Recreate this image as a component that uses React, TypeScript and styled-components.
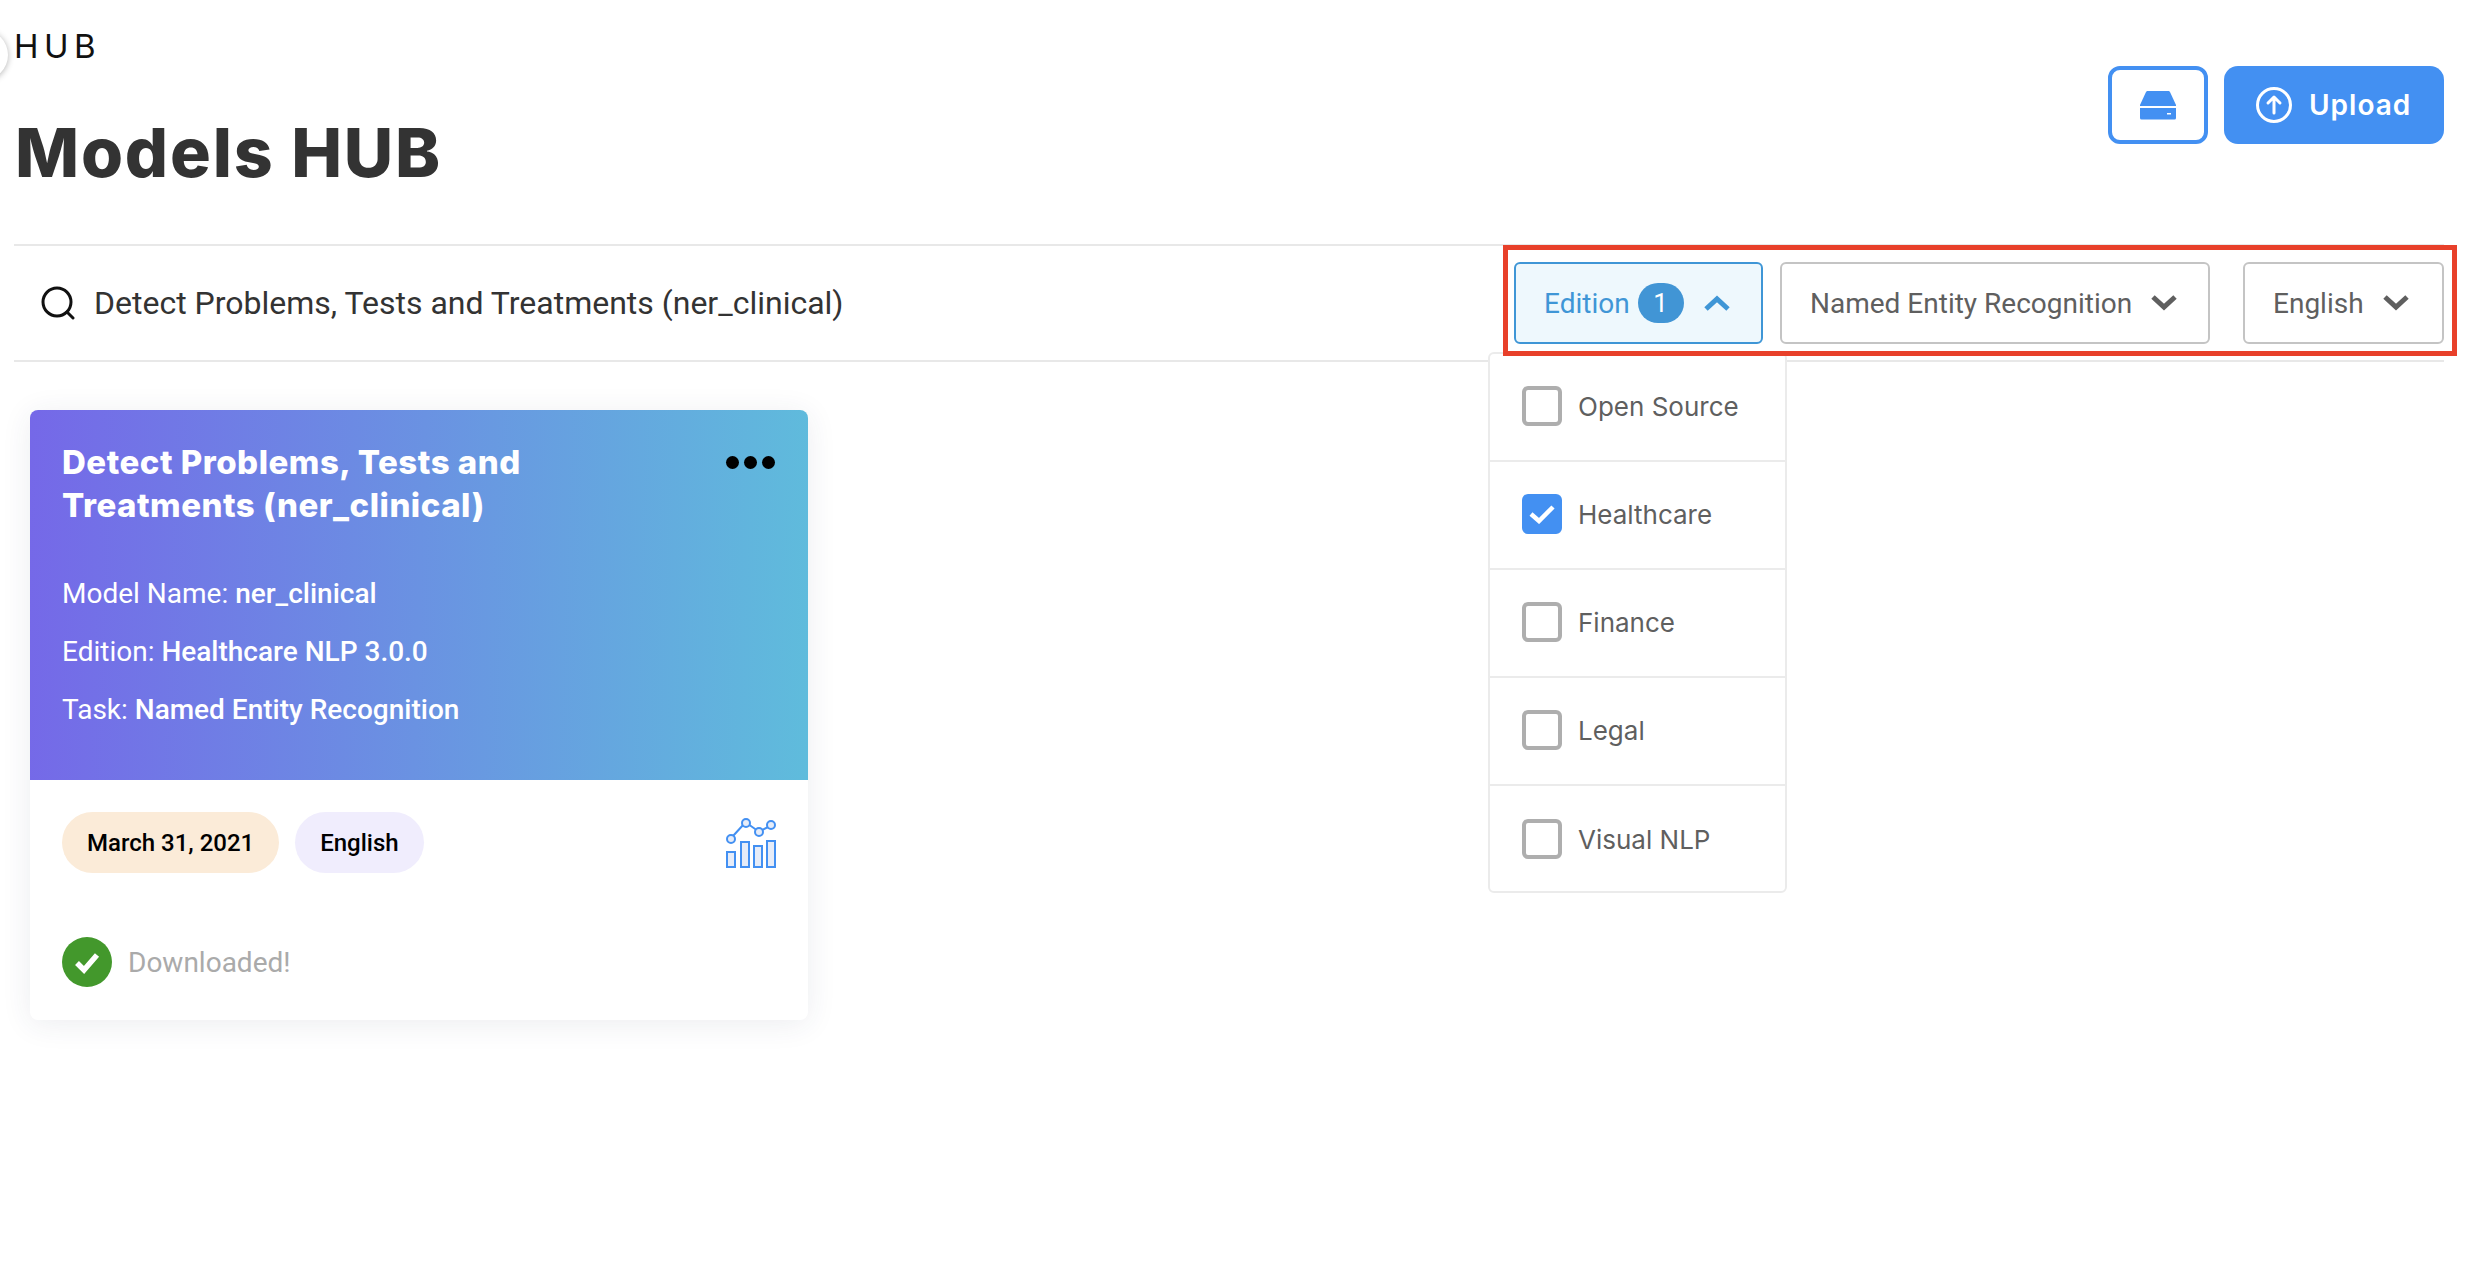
import React from 'react'
import styled, { createGlobalStyle } from 'styled-components'

const GlobalStyle = createGlobalStyle`
  html, body {
    margin: 0;
    padding: 0;
    background: #fff;
    font-family: Roboto, "Liberation Sans", sans-serif;
  }
  * {
    box-sizing: border-box;
  }
`

const Page = styled.div`
  position: relative;
  width: 2476px;
  height: 1272px;
  padding: 0 32px 0 14px;
  overflow: hidden;
`

const SideToggle = styled.div`
  position: absolute;
  left: -42px;
  top: 30px;
  width: 50px;
  height: 50px;
  border-radius: 50%;
  background: #fff;
  box-shadow: 0 1px 6px rgba(0, 0, 0, 0.3);
`

const Header = styled.header`
  display: flex;
  justify-content: space-between;
  align-items: flex-start;
  height: 244px;
`

const Breadcrumb = styled.div`
  margin-top: 30px;
  font-family: Inter, sans-serif;
  font-size: 33px;
  line-height: 32px;
  letter-spacing: 5.5px;
  color: #111;
`

const Title = styled.h1`
  margin: 54px 0 0 1px;
  font-family: Inter, sans-serif;
  font-size: 68px;
  line-height: 72px;
  font-weight: 800;
  letter-spacing: 1.8px;
  color: #333;
`

const Actions = styled.div`
  display: flex;
  gap: 16px;
  margin-top: 66px;
`

const StorageButton = styled.button`
  display: flex;
  align-items: center;
  justify-content: center;
  width: 100px;
  height: 78px;
  padding: 0;
  background: #fff;
  border: 4px solid #4390f2;
  border-radius: 12px;
`

const UploadButton = styled.button`
  display: flex;
  align-items: center;
  gap: 17px;
  width: 220px;
  height: 78px;
  padding: 0 0 0 32px;
  background: #4390f2;
  border: 0;
  border-radius: 14px;
  color: #fff;
  font-family: Inter, sans-serif;
  font-size: 28px;
  font-weight: 600;
  letter-spacing: 1px;
`

const FilterBar = styled.div`
  display: flex;
  justify-content: space-between;
  align-items: center;
  height: 118px;
  padding-left: 27px;
  border-top: 2px solid #e8e8e8;
  border-bottom: 2px solid #e8e8e8;
`

const Search = styled.div`
  display: flex;
  align-items: center;
  gap: 19px;
  font-size: 32px;
  color: #333;
`

const Filters = styled.div`
  display: flex;
  align-items: center;
`

const FilterWrap = styled.div<{ $gap: number }>`
  position: relative;
  margin-right: ${p => p.$gap}px;
`

const FilterButton = styled.div<{ $active?: boolean; $width: number }>`
  display: flex;
  align-items: center;
  width: ${p => p.$width}px;
  height: 82px;
  padding-left: 28px;
  border: 2px solid ${p => (p.$active ? '#3f96d6' : '#c4c4c4')};
  border-radius: 6px;
  background: ${p => (p.$active ? '#eef8fd' : '#fff')};
  color: ${p => (p.$active ? '#3f96d6' : '#5f5f5f')};
  font-size: 28px;
`

const Count = styled.span`
  display: flex;
  align-items: center;
  justify-content: center;
  width: 46px;
  height: 40px;
  margin-left: 8px;
  border-radius: 20px;
  background: #4195d5;
  color: #fff;
  font-size: 26px;
`

const Chevron = styled.svg<{ $left: number }>`
  width: 26px;
  height: 16px;
  margin-left: ${p => p.$left}px;
`

const Menu = styled.div`
  position: absolute;
  left: -26px;
  top: 90px;
  width: 299px;
  height: 541px;
  background: #fff;
  border: 2px solid #ebebeb;
  border-radius: 6px;
  z-index: 1;
`

const MenuItem = styled.div`
  display: flex;
  align-items: center;
  gap: 16px;
  height: 108px;
  padding: 0 0 2px 32px;
  border-bottom: 2px solid #ebebeb;
  color: #5f5f5f;
  font-family: Inter, sans-serif;
  font-size: 26px;

  &:last-child {
    border-bottom: 0;
  }
`

const Checkbox = styled.span<{ $checked?: boolean }>`
  display: flex;
  align-items: center;
  justify-content: center;
  width: 40px;
  height: 40px;
  border: ${p => (p.$checked ? '0' : '4px solid #aeaeae')};
  border-radius: 6px;
  background: ${p => (p.$checked ? '#4390f2' : '#fff')};
`

const Highlight = styled.div`
  position: absolute;
  left: 1503px;
  top: 245px;
  width: 954px;
  height: 111px;
  border: 5px solid #e8402a;
  pointer-events: none;
  z-index: 2;
`

const CardArea = styled.section`
  padding: 48px 0 0 16px;
`

const Card = styled.article`
  width: 778px;
  height: 610px;
  border-radius: 8px;
  background: #fff;
  box-shadow: 0 4px 30px rgba(40, 50, 90, 0.09);
  overflow: hidden;
`

const CardTop = styled.div`
  height: 370px;
  padding: 31px 32px 0;
  background: linear-gradient(92deg, #7568e8 0%, #5fbcdc 100%);
  color: #fff;
`

const CardTitleRow = styled.div`
  display: flex;
  justify-content: space-between;
  align-items: flex-start;
  height: 124px;
`

const CardTitle = styled.h2`
  margin: 0;
  width: 520px;
  font-family: Inter, sans-serif;
  font-size: 33px;
  line-height: 43px;
  font-weight: 800;
  letter-spacing: 0.5px;
`

const Dots = styled.div`
  display: flex;
  gap: 5px;
  margin: 15px 1px 0 0;
`

const Dot = styled.span`
  width: 13px;
  height: 13px;
  border-radius: 50%;
  background: #000;
`

const Meta = styled.div`
  height: 58px;
  font-size: 28px;
  line-height: 58px;
`

const Strong = styled.b`
  font-weight: 500;
`

const CardBottom = styled.div`
  padding: 32px 32px 0;
`

const TagRow = styled.div`
  display: flex;
  align-items: center;
  gap: 16px;
`

const Tag = styled.span<{ $bg: string }>`
  display: flex;
  align-items: center;
  height: 61px;
  padding: 0 25px;
  border-radius: 31px;
  background: ${p => p.$bg};
  color: #000;
  font-size: 24px;
  font-weight: 500;
`

const ChartIcon = styled.svg`
  width: 50px;
  height: 50px;
  margin-left: auto;
`

const Status = styled.div`
  display: flex;
  align-items: center;
  gap: 16px;
  margin-top: 64px;
  color: #aaa;
  font-size: 28px;
`

const editions = ['Open Source', 'Healthcare', 'Finance', 'Legal', 'Visual NLP']

const App = () => (
  <Page>
    <GlobalStyle />
    <SideToggle />
    <Header>
      <div>
        <Breadcrumb>HUB</Breadcrumb>
        <Title>Models HUB</Title>
      </div>
      <Actions>
        <StorageButton>
          <svg width="38" height="30" viewBox="0 0 38 30">
            <path d="M8 1h22l1 1 6 13v1H1v-1L7 2z" fill="#4390f2" />
            <path d="M1 18h36v10a1.5 1.5 0 0 1-1.5 1.5h-33A1.5 1.5 0 0 1 1 28z" fill="#4390f2" />
            <rect x="28" y="23" width="4" height="1.5" fill="#fff" />
          </svg>
        </StorageButton>
        <UploadButton>
          <svg width="36" height="36" viewBox="0 0 36 36" fill="none" stroke="#fff" strokeWidth="3" strokeLinecap="round" strokeLinejoin="round">
            <circle cx="18" cy="18" r="16.5" />
            <path d="M18 26V11M12 16l6-6 6 6" />
          </svg>
          Upload
        </UploadButton>
      </Actions>
    </Header>
    <FilterBar>
      <Search>
        <svg width="34" height="34" viewBox="0 0 34 34" fill="none" stroke="#111" strokeWidth="3" strokeLinecap="round">
          <circle cx="16" cy="16" r="14" />
          <path d="M26 26l6 6" />
        </svg>
        Detect Problems, Tests and Treatments (ner_clinical)
      </Search>
      <Filters>
        <FilterWrap $gap={17}>
          <FilterButton $active $width={249}>
            Edition
            <Count>1</Count>
            <Chevron $left={20} viewBox="0 0 26 16" fill="none" stroke="#3f96d6" strokeWidth="5">
              <path d="M2 14L13 4l11 10" />
            </Chevron>
          </FilterButton>
          <Menu>
            {editions.map(name => (
              <MenuItem key={name}>
                <Checkbox $checked={name === 'Healthcare'}>
                  {name === 'Healthcare' && (
                    <svg width="26" height="20" viewBox="0 0 26 20" fill="none" stroke="#fff" strokeWidth="4.5">
                      <path d="M2 10l8 7L24 3" />
                    </svg>
                  )}
                </Checkbox>
                {name}
              </MenuItem>
            ))}
          </Menu>
        </FilterWrap>
        <FilterWrap $gap={33}>
          <FilterButton $width={430}>
            Named Entity Recognition
            <Chevron $left={19} viewBox="0 0 26 16" fill="none" stroke="#5f5f5f" strokeWidth="5">
              <path d="M2 2l11 10L24 2" />
            </Chevron>
          </FilterButton>
        </FilterWrap>
        <FilterWrap $gap={0}>
          <FilterButton $width={201}>
            English
            <Chevron $left={19} viewBox="0 0 26 16" fill="none" stroke="#5f5f5f" strokeWidth="5">
              <path d="M2 2l11 10L24 2" />
            </Chevron>
          </FilterButton>
        </FilterWrap>
      </Filters>
    </FilterBar>
    <Highlight />
    <CardArea>
      <Card>
        <CardTop>
          <CardTitleRow>
            <CardTitle>Detect Problems, Tests and Treatments (ner_clinical)</CardTitle>
            <Dots>
              <Dot />
              <Dot />
              <Dot />
            </Dots>
          </CardTitleRow>
          <Meta>Model Name: <Strong>ner_clinical</Strong></Meta>
          <Meta>Edition: <Strong>Healthcare NLP 3.0.0</Strong></Meta>
          <Meta>Task: <Strong>Named Entity Recognition</Strong></Meta>
        </CardTop>
        <CardBottom>
          <TagRow>
            <Tag $bg="#fbebd8">March 31, 2021</Tag>
            <Tag $bg="#f0edfd">English</Tag>
            <ChartIcon viewBox="0 0 50 50" fill="none" stroke="#4390f2" strokeWidth="2">
              <path d="M7 18l11-12M22 6l10 7M36 12l8-4" />
              <circle cx="5" cy="21" r="4" fill="#e6ecf8" />
              <circle cx="20" cy="5" r="4" fill="#e6ecf8" />
              <circle cx="33" cy="14" r="4" fill="#e6ecf8" />
              <circle cx="45" cy="7" r="4" fill="#e6ecf8" />
              <rect x="1" y="34" width="8" height="15" fill="#e6ecf8" />
              <rect x="15" y="24" width="8" height="25" fill="#e6ecf8" />
              <rect x="28" y="28" width="8" height="21" fill="#e6ecf8" />
              <rect x="41" y="23" width="8" height="26" fill="#e6ecf8" />
            </ChartIcon>
          </TagRow>
          <Status>
            <svg width="50" height="50" viewBox="0 0 50 50">
              <circle cx="25" cy="25" r="25" fill="#43982c" />
              <path d="M15 26l7 7 13-15" fill="none" stroke="#fff" strokeWidth="5.5" />
            </svg>
            Downloaded!
          </Status>
        </CardBottom>
      </Card>
    </CardArea>
  </Page>
)

export default App
